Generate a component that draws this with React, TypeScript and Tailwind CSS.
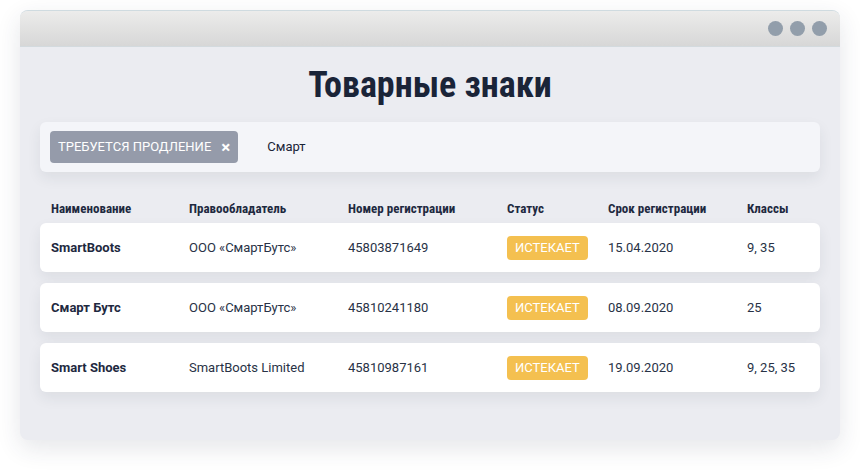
const rows = [
  { name: 'SmartBoots', owner: 'ООО «СмартБутс»', number: '45803871649', date: '15.04.2020', classes: '9, 35' },
  { name: 'Смарт Бутс', owner: 'ООО «СмартБутс»', number: '45810241180', date: '08.09.2020', classes: '25' },
  { name: 'Smart Shoes', owner: 'SmartBoots Limited', number: '45810987161', date: '19.09.2020', classes: '9, 25, 35' },
]

const headers = ['Наименование', 'Правообладатель', 'Номер регистрации', 'Статус', 'Срок регистрации', 'Классы']

const cols = 'grid grid-cols-[138px_159px_159px_101px_139px_1fr] items-center'

export default function App() {
  return (
    <div className="w-[860px] h-[470px] bg-white pt-[10px] pl-[20px] font-[Roboto,sans-serif]">
      <div className="w-[820px] h-[430px] rounded-lg overflow-hidden bg-[#ebecf1] shadow-[0_8px_24px_rgba(40,50,70,0.12)] border-t border-[#cfdbe0]">
        {/* Title bar */}
        <div className="h-[36px] bg-gradient-to-b from-[#ececeb] to-[#d7d7d7] border-b border-[#d3dade] flex items-center justify-end pr-[13px] gap-[7px]">
          <span className="w-[15px] h-[15px] rounded-full bg-[#929eab]" />
          <span className="w-[15px] h-[15px] rounded-full bg-[#929eab]" />
          <span className="w-[15px] h-[15px] rounded-full bg-[#929eab]" />
        </div>

        <div className="px-[20px]">
          <div className="h-[75px] flex items-center justify-center">
            <h1 className="text-[36px] leading-none font-bold text-[#1a2438] font-[family-name:'Roboto_Condensed','DejaVu_Sans_Condensed',Roboto,sans-serif] [font-stretch:condensed]">
              Товарные знаки
            </h1>
          </div>

          {/* Search */}
          <div className="h-[50px] rounded-md bg-[#f4f5f9] shadow-[0_6px_14px_rgba(40,50,70,0.08)] flex items-center px-[10px]">
            <div className="h-[32px] rounded bg-[#959baa] flex items-center pl-[8px] pr-[8px] gap-[10px] text-white text-[13px] uppercase">
              <span>Требуется продление</span>
              <span className="font-bold text-[17px] leading-none">×</span>
            </div>
            <span className="ml-[29px] text-[13px] text-[#1a2438]">Смарт</span>
          </div>

          {/* Header */}
          <div className={`${cols} mt-[27px] h-[16px] pl-[11px] text-[13px] font-bold text-[#1e2940] font-[family-name:'Roboto_Condensed','DejaVu_Sans_Condensed',Roboto,sans-serif] [font-stretch:condensed]`}>
            {headers.map((h) => (
              <span key={h}>{h}</span>
            ))}
          </div>

          <div className="mt-[8px] flex flex-col gap-[11px]">
            {rows.map((r) => (
              <div key={r.number} className={`${cols} h-[49px] pl-[11px] bg-white rounded-md shadow-[0_6px_14px_rgba(40,50,70,0.08)] text-[13px] text-[#283246]`}>
                <span className="font-bold text-[#1e2940]">{r.name}</span>
                <span>{r.owner}</span>
                <span>{r.number}</span>
                <span>
                  <span className="inline-flex items-center h-[24px] px-[8px] rounded bg-[#f4c050] text-white uppercase">Истекает</span>
                </span>
                <span>{r.date}</span>
                <span>{r.classes}</span>
              </div>
            ))}
          </div>
        </div>
      </div>
    </div>
  )
}
